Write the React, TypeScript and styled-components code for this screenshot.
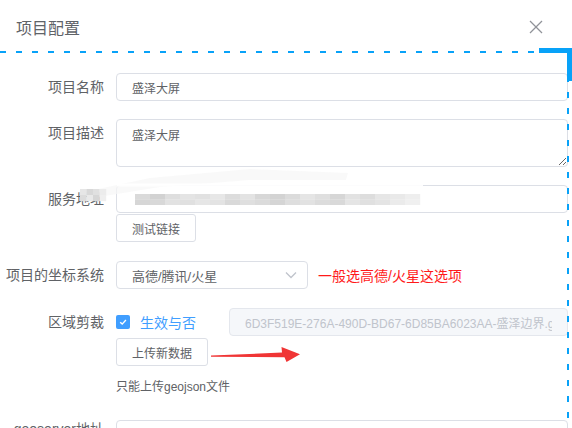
import React from "react";
import styled, { createGlobalStyle } from "styled-components";

const GlobalStyle = createGlobalStyle`
  html, body {
    margin: 0;
    padding: 0;
    background: #ffffff;
    font-family: "Liberation Sans", "Noto Sans CJK SC", sans-serif;
  }
  * { box-sizing: border-box; }
`;

const Page = styled.div`
  position: relative;
  width: 572px;
  height: 428px;
  overflow: hidden;
  background: #ffffff;
`;

const Header = styled.header`
  display: flex;
  justify-content: space-between;
  align-items: flex-start;
  height: 52px;
  padding: 17px 24px 0 16px;
`;

const Title = styled.h2`
  margin: 0;
  font-size: 16px;
  line-height: 24px;
  font-weight: 400;
  color: #5f6368;
`;

const CloseButton = styled.button`
  margin-top: -2px;
  width: 24px;
  height: 24px;
  padding: 0;
  border: 0;
  background: none;
  color: #909399;
  display: flex;
`;

const Body = styled.div`
  padding: 21px 4px 0 0;
`;

const FormItem = styled.div<{ $mb?: number }>`
  position: relative;
  display: grid;
  grid-template-columns: 116px 1fr;
  margin-bottom: ${(p) => (p.$mb ?? 18)}px;
`;

const Label = styled.label<{ $lh?: number }>`
  text-align: right;
  padding-right: 12px;
  font-size: 14px;
  line-height: ${(p) => (p.$lh ?? 28)}px;
  color: #606266;
  white-space: nowrap;
`;

const Control = styled.div`
  display: flex;
  flex-direction: column;
  align-items: flex-start;
  min-width: 0;
`;

const TextInput = styled.input<{ $disabled?: boolean }>`
  width: 100%;
  height: 28px;
  border: 1px solid ${(p) => (p.$disabled ? "#e4e7ed" : "#dcdfe6")};
  border-radius: 4px;
  padding: 0 15px;
  font-family: inherit;
  font-size: 12px;
  color: ${(p) => (p.$disabled ? "#c0c4cc" : "#606266")};
  background: ${(p) => (p.$disabled ? "#f5f7fa" : "#ffffff")};
  outline: none;
  min-width: 0;
`;

const TextArea = styled.textarea`
  display: block;
  width: 100%;
  height: 48px;
  border: 1px solid #dcdfe6;
  border-radius: 4px;
  padding: 7px 15px;
  font-family: inherit;
  font-size: 12px;
  line-height: 1.5;
  color: #606266;
  resize: vertical;
  outline: none;
`;

const FakeInput = styled.div`
  width: 100%;
  height: 28px;
  border: 1px solid #dcdfe6;
  border-radius: 4px;
  padding-left: 18px;
  display: flex;
  align-items: center;
`;

const Button = styled.button`
  height: 28px;
  margin-top: 1px;
  padding: 0 15px;
  border: 1px solid #dcdfe6;
  border-radius: 3px;
  background: #ffffff;
  font-family: inherit;
  font-size: 12px;
  color: #606266;
`;

const SelectRow = styled.div`
  display: flex;
  align-items: center;
  gap: 10px;
`;

const SelectBox = styled.div`
  width: 192px;
  height: 28px;
  border: 1px solid #dcdfe6;
  border-radius: 4px;
  padding: 0 6px 0 15px;
  display: flex;
  align-items: center;
  justify-content: space-between;
  font-size: 13px;
  color: #606266;
`;

const Hint = styled.span`
  font-size: 14px;
  color: #ff1a1a;
`;

const CheckRow = styled.div`
  display: flex;
  align-items: center;
  width: 100%;
`;

const CheckBox = styled.span`
  width: 14px;
  height: 14px;
  border-radius: 2px;
  background: #409eff;
  display: flex;
  align-items: center;
  justify-content: center;
  flex: none;
`;

const CheckText = styled.span`
  margin: 0 33px 0 10px;
  font-size: 14px;
  color: #409eff;
  white-space: nowrap;
`;

const UploadRow = styled.div`
  display: flex;
  align-items: stretch;
  margin-top: 1px;
`;

const ArrowSvg = styled.svg`
  margin-left: 2px;
  flex: none;
`;

const Tip = styled.div`
  margin-top: 7px;
  font-size: 12px;
  line-height: 28px;
  color: #606266;
`;

const Smear = styled.svg`
  position: absolute;
  left: 0;
  top: -20px;
  pointer-events: none;
`;

const Selection = styled.svg`
  position: absolute;
  left: 0;
  top: 0;
  pointer-events: none;
`;

const mosaicTones = [
  ["#dadada", "#d2d2d2", "#dedede", "#e4e4e4", "#e1e1e1", "#e7e7e7", "#dcdcdc", "#e3e3e3", "#d7d7d7", "#d3d3d3", "#dbdbdb", "#e5e5e5", "#dfdfdf", "#d6d6d6", "#e2e2e2", "#dddddd", "#e6e6e6", "#e9e9e9", "#eeeeee"],
  ["#d6d6d6", "#d8d8d8", "#e2e2e2", "#e0e0e0", "#e6e6e6", "#e3e3e3", "#d9d9d9", "#dfdfdf", "#dbdbdb", "#d5d5d5", "#dedede", "#e2e2e2", "#dcdcdc", "#d9d9d9", "#e5e5e5", "#e0e0e0", "#e4e4e4", "#ebebeb", "#f0f0f0"],
];

const labelTones = [
  ["#e6e6e6", "#d8d8d8", "#e0e0e0", "#ececec"],
  ["#dcdcdc", "#e9e9e9", "#d6d6d6", "#efefef"],
];

const Mosaic = () => (
  <svg width="286" height="11" viewBox="0 0 286 11">
    {mosaicTones.map((row, r) =>
      row.map((c, i) => (
        <rect key={`${r}-${i}`} x={i * 15} y={r * 5.5} width="15.2" height="5.7" fill={c} />
      ))
    )}
  </svg>
);

const Arrow = () => (
  <ArrowSvg width="92" height="28" viewBox="0 0 92 28">
    <polygon
      points="1,18.6 72,15.6 71.5,10 90,17.2 76.5,25 74.5,20.2 1,19.8"
      fill="#f03535"
    />
  </ArrowSvg>
);

export default function App() {
  return (
    <>
      <GlobalStyle />
      <Page>
        <Header>
          <Title>项目配置</Title>
          <CloseButton aria-label="关闭">
            <svg width="24" height="24" viewBox="0 0 24 24" fill="none" stroke="currentColor" strokeWidth="1.3">
              <path d="M18 6 6 18" />
              <path d="M6 6l12 12" />
            </svg>
          </CloseButton>
        </Header>
        <Body>
          <FormItem>
            <Label>项目名称</Label>
            <Control>
              <TextInput defaultValue="盛泽大屏" />
            </Control>
          </FormItem>
          <FormItem>
            <Label>项目描述</Label>
            <Control>
              <TextArea defaultValue="盛泽大屏" />
            </Control>
          </FormItem>
          <FormItem $mb={19}>
            <Label>服务地址</Label>
            <Control>
              <FakeInput>
                <Mosaic />
              </FakeInput>
              <Button>测试链接</Button>
            </Control>
            <Smear width="440" height="50" viewBox="0 0 440 50">
              <polygon
                points="84,27 150,13 250,4 348,8 346,15 250,15 160,22 92,33"
                fill="#f7f7f7"
                opacity="0.7"
              />
              <rect x="117" y="18.5" width="306" height="3" fill="#ffffff" opacity="0.9" />
              {labelTones.map((row, r) =>
                row.map((c, i) => (
                  <rect key={`l${r}-${i}`} x={80 + i * 6.5} y={24 + r * 6} width="6.7" height="6.2" fill={c} />
                ))
              )}
            </Smear>
          </FormItem>
          <FormItem $mb={19}>
            <Label>项目的坐标系统</Label>
            <Control>
              <SelectRow>
                <SelectBox>
                  <span>高德/腾讯/火星</span>
                  <svg width="20" height="20" viewBox="0 0 24 24" fill="none" stroke="#c0c4cc" strokeWidth="1.6">
                    <path d="m6 9 6 6 6-6" />
                  </svg>
                </SelectBox>
                <Hint>一般选高德/火星这选项</Hint>
              </SelectRow>
            </Control>
          </FormItem>
          <FormItem $mb={19}>
            <Label>区域剪裁</Label>
            <Control>
              <CheckRow>
                <CheckBox>
                  <svg width="10" height="10" viewBox="0 0 10 10" fill="none" stroke="#ffffff" strokeWidth="1.4">
                    <path d="M2.2 5.2 4.2 7.1 7.9 3" />
                  </svg>
                </CheckBox>
                <CheckText>生效与否</CheckText>
                <TextInput
                  $disabled
                  disabled
                  defaultValue="6D3F519E-276A-490D-BD67-6D85BA6023AA-盛泽边界.geojson"
                />
              </CheckRow>
              <UploadRow>
                <Button>上传新数据</Button>
                <Arrow />
              </UploadRow>
              <Tip>只能上传geojson文件</Tip>
            </Control>
          </FormItem>
          <FormItem>
            <Label $lh={19}>geoserver地址</Label>
            <Control>
              <TextInput defaultValue="" />
            </Control>
          </FormItem>
        </Body>
        <Selection width="572" height="428" viewBox="0 0 572 428">
          <line x1="0" y1="52" x2="539" y2="52" stroke="#08a2f8" strokeWidth="2" strokeDasharray="6 10" />
          <rect x="539" y="48" width="33" height="5" fill="#08a2f8" />
          <rect x="567" y="48" width="5" height="33" fill="#08a2f8" />
          <line x1="568" y1="81" x2="568" y2="428" stroke="#08a2f8" strokeWidth="2" strokeDasharray="6 10" strokeDashoffset="5" />
        </Selection>
      </Page>
    </>
  );
}
